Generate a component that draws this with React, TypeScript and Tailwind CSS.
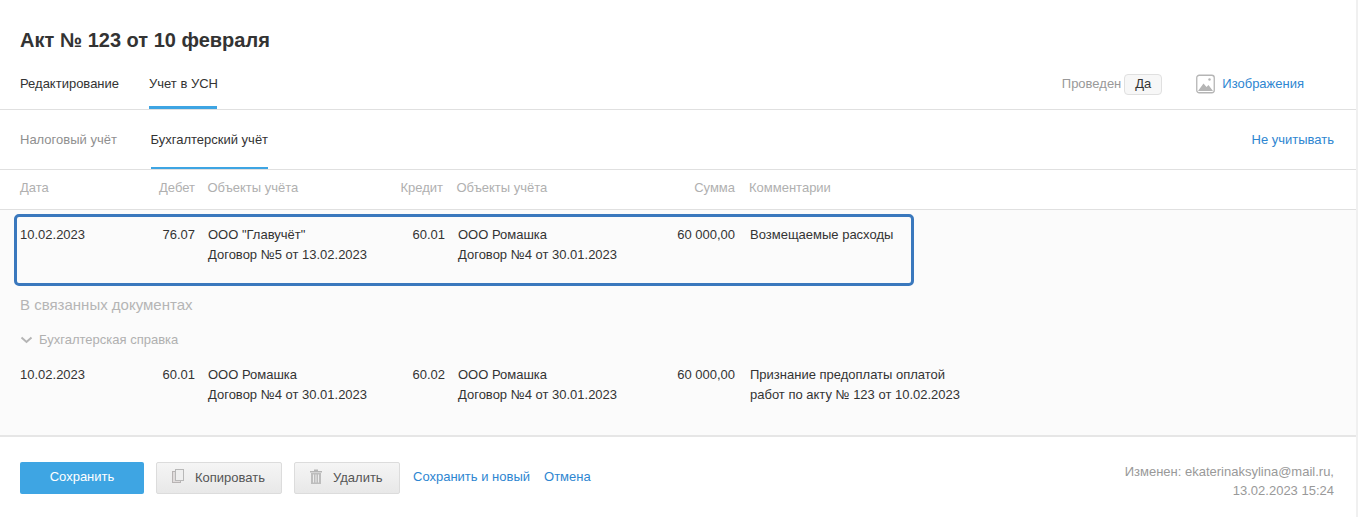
import React from "react";

const font = { fontFamily: '"Liberation Sans", Arial, sans-serif' };

function Row({ date, debit, obj1, credit, obj2, sum, c1, c2 }: { date: string; debit: string; obj1: string; credit: string; obj2: string; sum: string; c1: string; c2?: string }) {
  return (
    <div className="flex text-[13px] leading-[20px] text-[#333333]">
      <div className="w-[100px]">{date}</div>
      <div className="w-[75px] text-right">{debit}</div>
      <div className="w-[188px] pl-[13px]">
        <div>{obj1}</div>
        <div>Договор {obj1 === 'ООО "Главучёт"' ? "№5 от 13.02.2023" : "№4 от 30.01.2023"}</div>
      </div>
      <div className="w-[62px] text-right">{credit}</div>
      <div className="w-[215px] pl-[13px]">
        <div>{obj2}</div>
        <div>Договор №4 от 30.01.2023</div>
      </div>
      <div className="w-[75px] text-right">{sum}</div>
      <div className="pl-[15px]">
        <div>{c1}</div>
        {c2 && <div>{c2}</div>}
      </div>
    </div>
  );
}

export default function App() {
  return (
    <div className="w-[1358px] h-[517px] overflow-hidden bg-white border-r-2 border-[#f0f0f0] flex flex-col" style={font}>
      <div className="h-[110px] border-b border-[#e0e0e0] px-[20px] pt-[27px] flex flex-col shrink-0">
        <h1 className="text-[20px] leading-[26px] font-bold text-[#333333]">Акт № 123 от 10 февраля</h1>
        <div className="flex items-start mt-[18px] text-[13px] leading-[20px] text-[#333333]">
          <div className="mt-[3px] w-[129px]">Редактирование</div>
          <div className="h-[38px] w-[68px] whitespace-nowrap pt-[3px] border-b-[3px] border-[#3ea5e3]">Учет в УСН</div>
          <div className="ml-auto flex items-center mr-[32px] h-[26px]">
            <span className="text-[#999999]">Проведен</span>
            <span className="ml-[3px] h-[21px] w-[38px] flex items-center justify-center rounded-[4px] border border-[#e0e0e0] bg-[#f7f7f7]">Да</span>
            <svg className="ml-[34px]" width="19" height="20" viewBox="0 0 19 20" fill="none">
              <rect x="0.75" y="1.25" width="17.5" height="17.5" rx="2.5" stroke="#b5b5b5" strokeWidth="1.3" />
              <path d="M2 17 L7.5 9.5 L10.5 13 L12.5 11 L17 17 Z" fill="#b5b5b5" />
              <circle cx="13.5" cy="5.5" r="1.2" fill="#b5b5b5" />
            </svg>
            <a className="ml-[7px] text-[#2e86d1]">Изображения</a>
          </div>
        </div>
      </div>

      <div className="h-[60px] border-b border-[#e0e0e0] px-[20px] flex items-start text-[13px] leading-[20px] shrink-0">
        <div className="mt-[20px] w-[130.5px] text-[#8f8f8f]">Налоговый учёт</div>
        <div className="h-[59px] w-[117px] whitespace-nowrap pt-[20px] border-b-2 border-[#3ea5e3] text-[#333333]">Бухгалтерский учёт</div>
        <a className="ml-auto mt-[20px] mr-[2px] text-[#2e86d1]">Не учитывать</a>
      </div>

      <div className="h-[40px] border-b border-[#e0e0e0] px-[20px] flex items-start pt-[8px] text-[13px] leading-[20px] text-[#b0b0b0] shrink-0">
        <div className="w-[100px]">Дата</div>
        <div className="w-[75px] text-right">Дебет</div>
        <div className="w-[188px] pl-[12.5px]">Объекты учёта</div>
        <div className="w-[60px] text-right">Кредит</div>
        <div className="w-[217px] pl-[13.5px]">Объекты учёта</div>
        <div className="w-[75px] text-right">Сумма</div>
        <div className="pl-[14px]">Комментарии</div>
      </div>

      <div className="h-[227px] bg-[#fbfbfb] border-b-2 border-[#e6e6e6] pt-[4px] shrink-0">
        <div className="ml-[14px] w-[900px] h-[72px] border-[3px] border-[#3a78bd] rounded-[5px] pl-[3px] pt-[8px]">
          <Row date="10.02.2023" debit="76.07" obj1={'ООО "Главучёт"'} credit="60.01" obj2="ООО Ромашка" sum="60 000,00" c1="Возмещаемые расходы" />
        </div>
        <div className="ml-[20px] mt-[8px] text-[15px] leading-[22px] text-[#b5b5b5]">В связанных документах</div>
        <div className="ml-[20px] mt-[14px] flex items-center text-[13px] leading-[20px] text-[#b0b0b0]">
          <svg width="13" height="8" viewBox="0 0 13 8" fill="none" className="mr-[6px]">
            <path d="M1.5 1.5 L6.5 6 L11.5 1.5" stroke="#b5b5b5" strokeWidth="2" />
          </svg>
          Бухгалтерская справка
        </div>
        <div className="ml-[20px] mt-[15px]">
          <Row date="10.02.2023" debit="60.01" obj1="ООО Ромашка" credit="60.02" obj2="ООО Ромашка" sum="60 000,00" c1="Признание предоплаты оплатой" c2="работ по акту № 123 от 10.02.2023" />
        </div>
      </div>

      <div className="flex-1 px-[20px] pt-[25px] flex items-start text-[13px] leading-[20px]">
        <button className="w-[124px] h-[32px] rounded-[2px] bg-[#3ea5e3] text-white pb-[2px]">Сохранить</button>
        <button className="ml-[12px] w-[126px] h-[32px] rounded-[2px] border border-[#dcdcdc] bg-gradient-to-b from-[#f5f5f5] to-[#e8e8e8] text-[#555555] flex items-center pl-[15px]">
          <svg width="13" height="15" viewBox="0 0 13 15" fill="none" className="mt-[-3px]">
            <rect x="0.5" y="2.5" width="8" height="11" fill="#e0dcdc" stroke="#b8b4b4" />
            <rect x="3.5" y="0.5" width="8" height="11" fill="#efefef" stroke="#b8b8b8" />
          </svg>
          <span className="ml-[10px]">Копировать</span>
        </button>
        <button className="ml-[12px] w-[106px] h-[32px] rounded-[2px] border border-[#dcdcdc] bg-gradient-to-b from-[#f5f5f5] to-[#e8e8e8] text-[#555555] flex items-center pl-[15px]">
          <svg width="12" height="15" viewBox="0 0 12 15" fill="none" className="mt-[-3px]">
            <rect x="0" y="2" width="12" height="1.5" fill="#b5b5b5" />
            <rect x="4" y="0.5" width="4" height="1.5" fill="#b5b5b5" />
            <rect x="1" y="4" width="10" height="11" fill="#bdbdbd" />
            <path d="M3.5 5.5 V13.5 M6 5.5 V13.5 M8.5 5.5 V13.5" stroke="#ececec" />
          </svg>
          <span className="ml-[11px]">Удалить</span>
        </button>
        <a className="ml-[13px] mt-[5px] text-[#2e86d1]">Сохранить и новый</a>
        <a className="ml-[14px] mt-[5px] text-[#2e86d1]">Отмена</a>
        <div className="ml-auto mr-[2px] mt-[-6px] text-right text-[#999999] leading-[19px] pt-[6px]">
          <div>Изменен: ekaterinaksylina@mail.ru,</div>
          <div>13.02.2023 15:24</div>
        </div>
      </div>
    </div>
  );
}
